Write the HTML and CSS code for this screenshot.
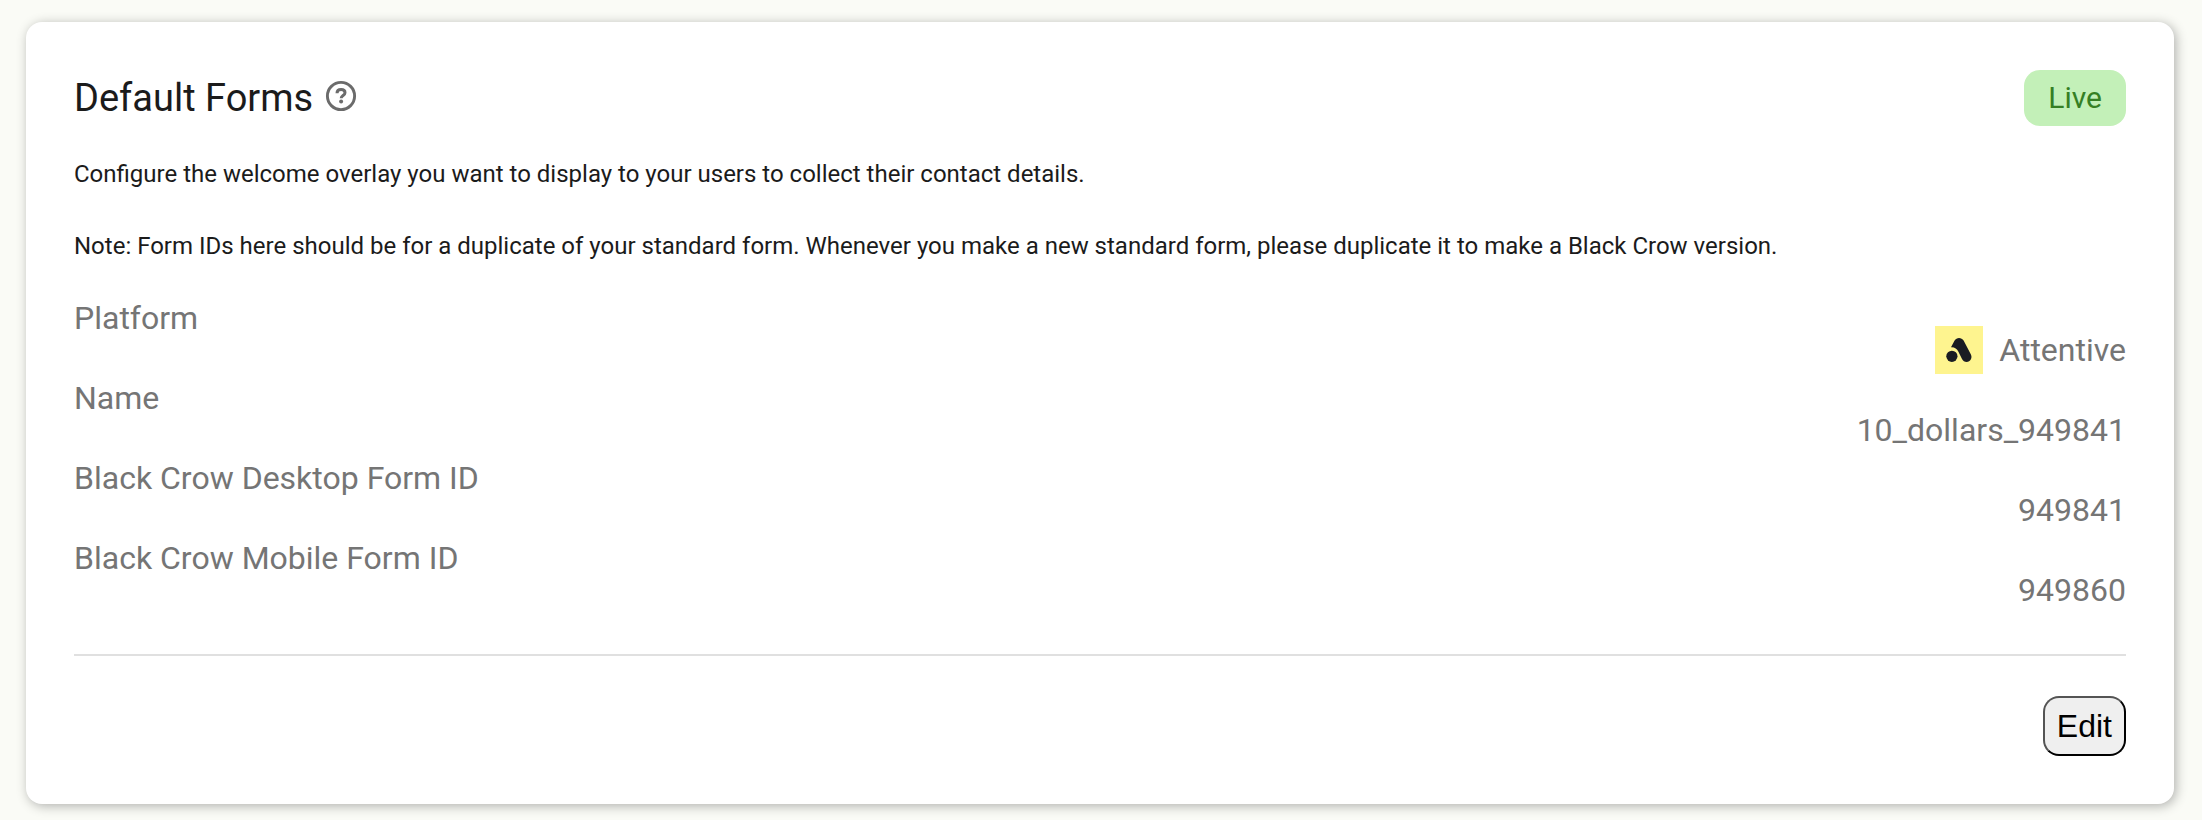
FILE: index.html
```html
<!DOCTYPE html>
<html lang="en">
<head>
  <meta charset="UTF-8">
  <meta name="viewport" content="width=device-width, initial-scale=1">
  <title>Default Forms</title>
  <link rel="stylesheet" href="styles.css">
</head>
<body>
  <main class="card">
    <header class="card-header">
      <h1>Default Forms</h1>
      <button type="button" class="help-btn" aria-label="About default forms">
        <svg viewBox="0 0 32 32" fill="none" stroke="currentColor">
          <circle cx="16" cy="16" r="13.6" stroke-width="2.9"/>
          <path d="M12 13.3c0-2.5 1.7-3.7 4.1-3.7 2.3 0 3.9 1.2 3.9 3.1 0 2.8-3.8 2.9-3.8 5.6" stroke-width="3"/>
          <circle cx="16.1" cy="21.6" r="2" fill="currentColor" stroke="none"/>
        </svg>
      </button>
      <span class="badge">Live</span>
    </header>

    <div class="description">
      <p>Configure the welcome overlay you want to display to your users to collect their contact details.</p>
      <p>Note: Form IDs here should be for a duplicate of your standard form. Whenever you make a new standard form, please duplicate it to make a Black Crow version.</p>
    </div>

    <dl class="details">
      <div class="row">
        <dt>Platform</dt>
        <dd>
          <svg class="logo" viewBox="0 0 48 48" aria-hidden="true">
            <rect width="48" height="48" fill="#fef48f"/>
            <g fill="#1a1c22">
              <circle cx="16.9" cy="30.3" r="5.6"/>
              <path d="M19.6 14.5C21.5 11 26.6 11 28.6 14.6L35.8 28.2C37.8 32 35.2 35.9 31.7 35.9C29.6 35.9 28 34.8 27 32.9L23.3 25.6C22 22.8 19.4 21 16 21.3Z"/>
            </g>
          </svg>
          Attentive
        </dd>
      </div>
      <div class="row">
        <dt>Name</dt>
        <dd>10_dollars_949841</dd>
      </div>
      <div class="row">
        <dt>Black Crow Desktop Form ID</dt>
        <dd>949841</dd>
      </div>
      <div class="row">
        <dt>Black Crow Mobile Form ID</dt>
        <dd>949860</dd>
      </div>
    </dl>

    <footer class="card-footer">
      <button type="button" class="edit-btn">Edit</button>
    </footer>
  </main>
</body>
</html>
```
FILE: styles.css
```css
* {
  margin: 0;
  padding: 0;
  box-sizing: border-box;
}

body {
  font-family: Roboto, Arial, sans-serif;
  background: #fafbf6;
  color: #1b1b1b;
  padding: 22px 28px 16px 26px;
}

.card {
  background: #fff;
  border-radius: 16px;
  padding: 48px;
  box-shadow: 2px 2px 12px rgba(0, 0, 0, 0.3);
}

.card-header {
  display: flex;
  align-items: center;
  gap: 12px;
  margin-bottom: 32px;
}

h1 {
  font-size: 38px;
  font-weight: 400;
  line-height: 56px;
}

.help-btn {
  height: 36px;
  border: none;
  background: none;
  color: #6b6b6b;
  cursor: pointer;
}

.help-btn svg {
  display: block;
  width: 32px;
  height: 32px;
  margin-bottom: 4px;
}

.badge {
  margin-left: auto;
  padding: 0 24px;
  border-radius: 16px;
  background: #c3f0b8;
  color: #357f24;
  font-size: 30px;
  line-height: 56px;
}

.description {
  display: grid;
  gap: 40px;
  margin-bottom: 32px;
  font-size: 24px;
  line-height: 32px;
}

.details {
  padding-bottom: 40px;
  border-bottom: 2px solid #e0e0e0;
  color: #757575;
  font-size: 32px;
  line-height: 48px;
}

.row {
  display: flex;
  justify-content: space-between;
}

.row dd {
  display: flex;
  gap: 16px;
  margin-top: 32px;
}

.logo {
  width: 48px;
  height: 48px;
}

.card-footer {
  display: flex;
  justify-content: flex-end;
  margin-top: 40px;
}

.edit-btn {
  padding: 10px 12px;
  border: 2px outset #000;
  border-radius: 16px;
  background: #efefef;
  color: #000;
  font-family: "Liberation Sans", Arial, sans-serif;
  font-size: 32px;
  line-height: 36px;
  cursor: pointer;
}
```
